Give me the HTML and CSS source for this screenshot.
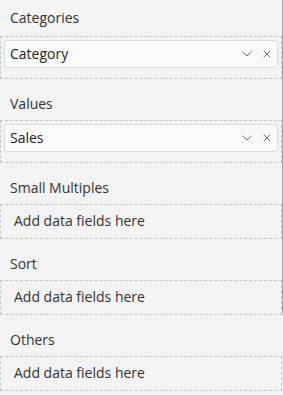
FILE: index.html
```html
<!DOCTYPE html>
<html>
<head>
<meta charset="utf-8">
<link rel="stylesheet" href="styles.css">
</head>
<body>
<div class="pane">
  <div class="label first">Categories</div>
  <div class="well filled">
    <div class="pill">
      <span class="pill-text">Category</span>
      <svg class="chev" width="10" height="6" viewBox="0 0 10 6"><path d="M0.5 0.8 L5 5 L9.5 0.8" fill="none" stroke="#6b6b6b" stroke-width="1"/></svg>
      <svg class="close" width="8" height="8" viewBox="0 0 8 8"><path d="M0.8 0.8 L7.2 7.2 M7.2 0.8 L0.8 7.2" fill="none" stroke="#7a7a7a" stroke-width="1"/></svg>
    </div>
  </div>

  <div class="label">Values</div>
  <div class="well filled">
    <div class="pill">
      <span class="pill-text">Sales</span>
      <svg class="chev" width="10" height="6" viewBox="0 0 10 6"><path d="M0.5 0.8 L5 5 L9.5 0.8" fill="none" stroke="#6b6b6b" stroke-width="1"/></svg>
      <svg class="close" width="8" height="8" viewBox="0 0 8 8"><path d="M0.8 0.8 L7.2 7.2 M7.2 0.8 L0.8 7.2" fill="none" stroke="#7a7a7a" stroke-width="1"/></svg>
    </div>
  </div>

  <div class="label">Small Multiples</div>
  <div class="well empty">Add data fields here</div>

  <div class="label">Sort</div>
  <div class="well empty">Add data fields here</div>

  <div class="label">Others</div>
  <div class="well empty">Add data fields here</div>

  <div class="thumb"></div>
</div>
</body>
</html>
```

FILE: styles.css
```css
html, body {
  margin: 0;
  padding: 0;
  background: #f3f3f3;
}

body {
  font-family: "Open Sans", "Noto Sans", sans-serif;
  font-size: 14px;
  color: #252423;
}

.pane {
  position: relative;
  width: 283px;
  height: 395px;
  overflow: hidden;
}

.label {
  padding: 15px 0 6px 10px;
  line-height: 20px;
  height: 20px;
  color: #333333;
}

.label.first {
  padding-top: 8px;
  padding-bottom: 8px;
}

.well {
  box-sizing: border-box;
  width: 282px;
  border: 1px dashed #c8c8c8;
}

.well.filled {
  height: 43px;
  padding: 3px 3px 10px 3px;
}

.well.empty {
  height: 35px;
  padding: 6px 0 0 13px;
  line-height: 20px;
  color: #333333;
}

.pill {
  box-sizing: border-box;
  height: 28px;
  display: flex;
  align-items: center;
  background: #fafafa;
  border: 1px solid #dddddd;
  border-radius: 3px;
  padding: 0 6px 0 5px;
  line-height: 20px;
}

.pill-text {
  flex: 1;
}

.chev {
  display: block;
  margin-right: 11px;
}

.close {
  display: block;
}

.thumb {
  position: absolute;
  right: 0;
  top: 0;
  width: 1px;
  height: 313px;
  background: #a3a3a3;
}
```
